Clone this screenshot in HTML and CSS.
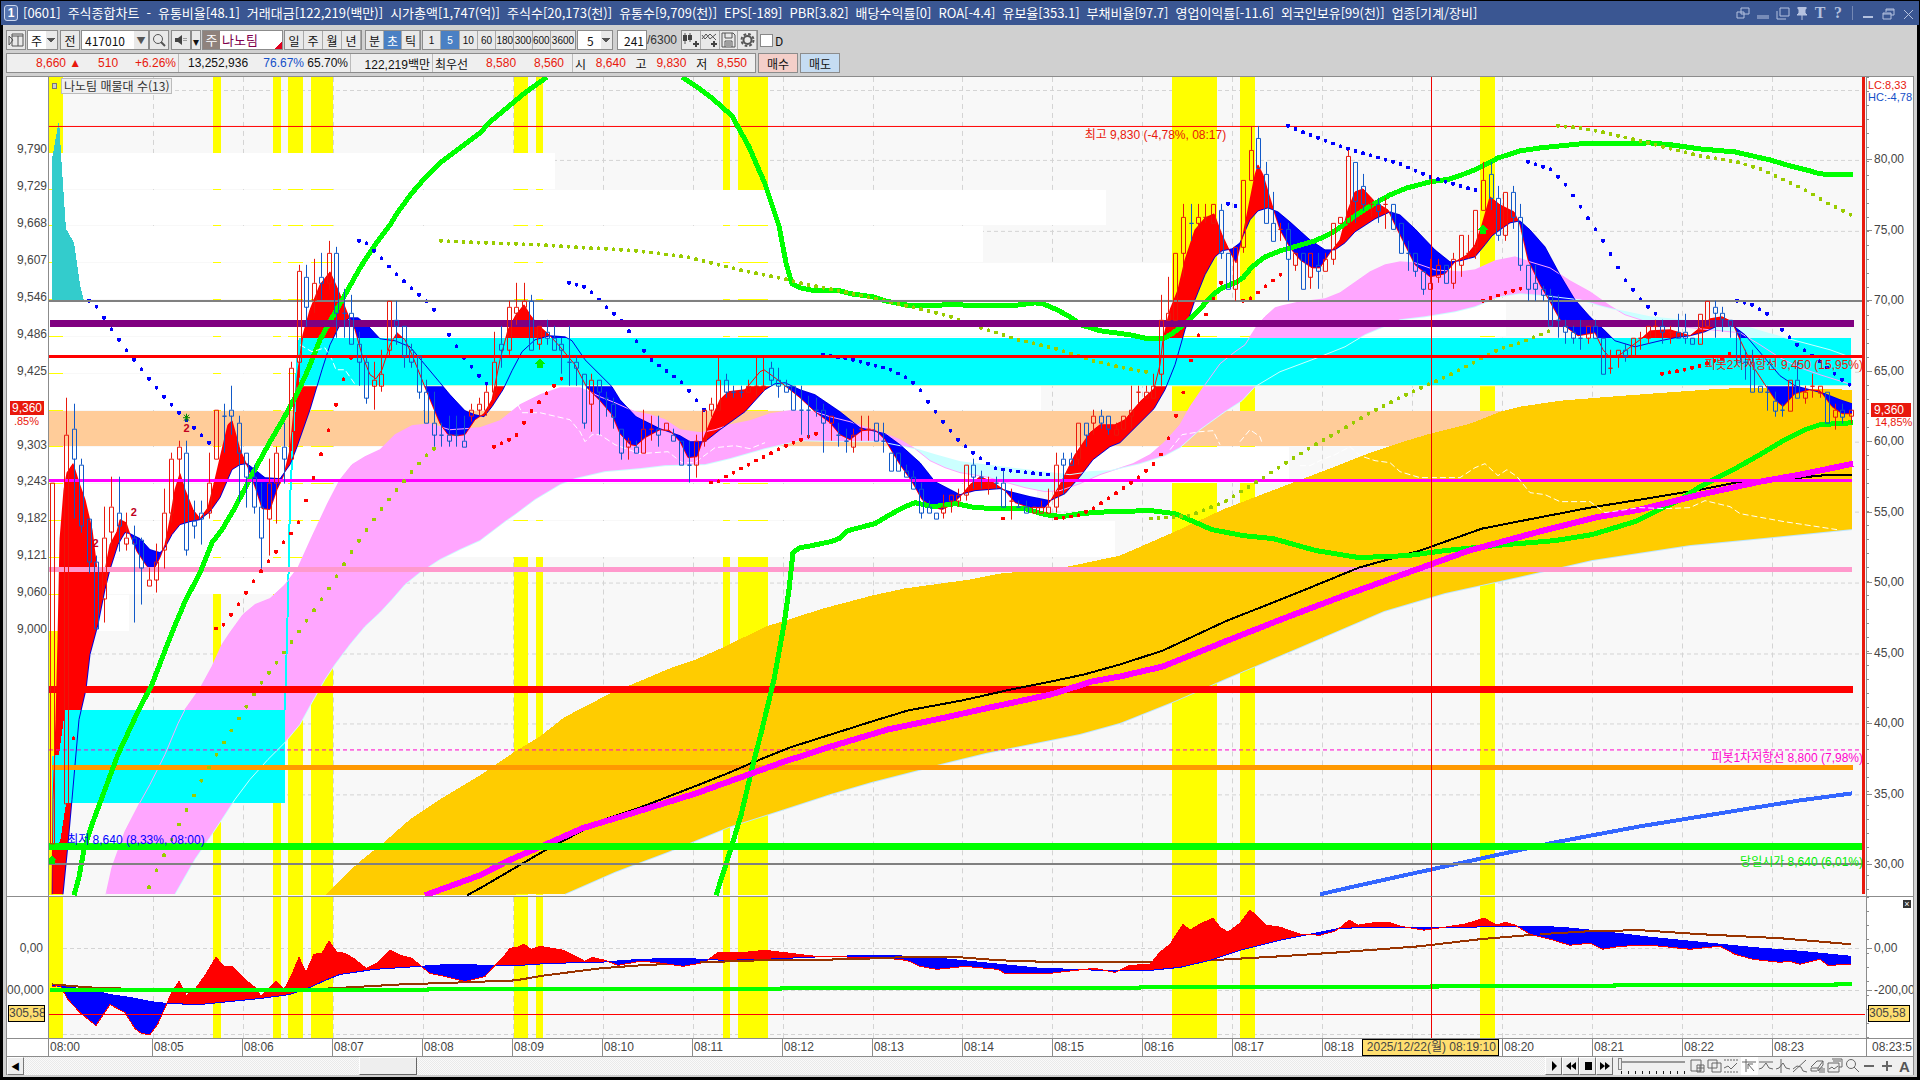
FILE: index.html
```html
<!DOCTYPE html>
<html lang="ko">
<head>
  <meta charset="UTF-8">
  <meta name="viewport" content="width=device-width, initial-scale=1.0">
  <title>[0601] 주식종합차트</title>
  <link rel="stylesheet" href="styles.css">
</head>
<body>
  <!-- Title bar -->
  <header class="titlebar">
    <span class="win-no">1</span>
    <h1><span>[0601]</span> <span>주식종합차트</span> <span>-</span> <span>유통비율[48.1]</span> <span>거래대금[122,219(백만)]</span> <span>시가총액[1,747(억)]</span> <span>주식수[20,173(천)]</span> <span>유통수[9,709(천)]</span> <span>EPS[-189]</span> <span>PBR[3.82]</span> <span>배당수익률[0]</span> <span>ROA[-4.4]</span> <span>유보율[353.1]</span> <span>부채비율[97.7]</span> <span>영업이익률[-11.6]</span> <span>외국인보유[99(천)]</span> <span>업종[기계/장비]</span></h1>
    <div class="win-buttons">
      <button aria-label="창 분리"><svg width="14" height="13"><path d="M5 1h8v6h-8zM1 5h7v6h-7z"/></svg></button>
      <button aria-label="접기"><svg width="14" height="13"><path d="M1 9h12M1 11h12"/></svg></button>
      <button aria-label="창 복사"><svg width="14" height="13"><path d="M4 1h9v8h-9zM1 4v8h9"/></svg></button>
      <button aria-label="고정"><svg width="12" height="13"><path class="solid" d="M2 0h8v2h-1v4l2 2h-10l2-2v-4h-1z"/><path d="M6 8v5"/></svg></button>
      <button class="glyph">T</button>
      <button class="glyph">?</button>
      <span class="bar"></span>
      <button aria-label="최소화"><svg width="14" height="13"><path d="M2 10h10" stroke-width="2"/></svg></button>
      <button aria-label="복원"><svg width="14" height="13"><path d="M5 5v-3h8v6h-3M2 6h8v6h-8zM5 3h8M2 7h8"/></svg></button>
      <button aria-label="닫기"><svg width="14" height="13"><path d="M3 3l9 9M12 3l-9 9"/></svg></button>
    </div>
  </header>

  <main class="client">
    <!-- Toolbar -->
    <div class="toolbar">
      <button class="tb" aria-label="패널"><svg width="16" height="14"><path d="M4 1h11v12h-11zM4 3h11M10 3v10M1 3v9l4-5z" class="ln"/></svg></button>
      <select class="mini" aria-label="구분"><option>주</option></select>
      <button class="tb prev">전</button>
      <span class="combo"><input class="code" aria-label="종목코드" value="417010"><button aria-label="목록">▼</button></span>
      <button class="tb find" aria-label="검색"><svg width="16" height="16"><circle cx="7" cy="7" r="4.5" class="ln"/><path d="M10 10l4 4" class="ln thick"/></svg></button>
      <button class="tb" aria-label="소리"><svg width="14" height="12"><path d="M1 4h3l4-3v10l-4-3h-3z" class="fl"/><path d="M10 4v4M12 4v4" class="ln" stroke-dasharray="1 1"/></svg></button>
      <button class="tb thin" aria-label="소리 설정">▾</button>
      <span class="stock"><b>주</b>나노팀</span>
      <div class="group period"><button>일</button><button>주</button><button>월</button><button>년</button></div>
      <div class="group unit"><button>분</button><button class="on">초</button><button>틱</button></div>
      <div class="group secs"><button>1</button><button class="on">5</button><button>10</button><button>60</button><button>180</button><button>300</button><button>600</button><button class="wide">3600</button></div>
      <select class="mini secsel" aria-label="초"><option>5</option></select>
      <input class="count" aria-label="봉 개수" value="241"><span class="total">/6300</span>
      <div class="group icons">
        <button aria-label="봉 추가"><svg width="17" height="16"><path d="M3 1v11M8 1v9" class="ln"/><path d="M1 3h4v6h-4zM6 3h4v5h-4zM11 11h6v2h-6zM13 9h2v6h-2z" class="fl"/></svg></button>
        <button aria-label="지표 추가"><svg width="17" height="16"><path d="M1 7l4-5 4 5 6-5M1 3l3 4 5-5 6 6" class="ln"/><path d="M10 11h6v2h-6zM12 9h2v6h-2z" class="fl"/></svg></button>
        <button aria-label="저장"><svg width="15" height="16"><path d="M1 1h11l2 2v12h-13zM4 1v5h7v-5M4 15v-6h7v6M5 11h5M5 13h5" class="ln"/></svg></button>
        <button aria-label="설정"><svg width="15" height="16"><circle cx="7.500" cy="8" r="4" class="ln gear"/><circle cx="7.500" cy="8" r="6" class="ln" stroke-width="2" stroke-dasharray="2.700 2"/></svg></button>
      </div>
      <label class="chk"><input type="checkbox">D</label>
    </div>

    <!-- Quote row -->
    <div class="quote">
      <div class="cells">
        <div class="cell w1 up"><span>8,660 ▲</span><span>510</span><span>+6.26%</span></div>
        <div class="cell w1"><span>13,252,936</span><span class="down pct">76.67%</span><span>65.70%</span></div>
        <div class="cell w2"><span>122,219백만</span></div>
        <div class="cell w3"><span>최우선</span><span class="up">8,580</span><span class="up">8,560</span></div>
        <div class="cell w4"><span>시</span><span class="up">8,640</span><span>고</span><span class="up">9,830</span><span>저</span><span class="up">8,550</span></div>
      </div>
      <button class="buy">매수</button>
      <button class="sell">매도</button>
    </div>

    <!-- Chart -->
    <section class="chart">
      <div class="pane main">
        <div class="axis left">
          <span>9,790</span><span>9,729</span><span>9,668</span><span>9,607</span><span>9,546</span><span>9,486</span><span>9,425</span>
          <span class="now">9,360<i>.85%</i></span>
          <span>9,303</span><span>9,243</span><span>9,182</span><span>9,121</span><span>9,060</span><span>9,000</span>
        </div>
        <div class="plot">
          <svg id="main-plot" viewBox="49 77 1817 820" preserveAspectRatio="none"></svg>
          <span class="tag name"><i></i>나노팀 매물대 수(13)</span>
          <span class="note high">최고 9,830 (-4,78%, 08:17)</span>
          <span class="note low">최저 8,640 (8,33%, 08:00)</span>
          <span class="note r2">피봇2차저항선 9,450 (15,95%)</span>
          <span class="note r1">피봇1차저항선 8,800 (7,98%)</span>
          <span class="note open">당일시가 8,640 (6,01%)</span>
          <span class="two t1">2</span><span class="two t2">2</span><span class="two t3">2</span>
        </div>
        <div class="axis right">
          <p class="lc">LC:8,33</p><p class="hc">HC:-4,78</p>
          <span>80,00</span><span>75,00</span><span>70,00</span><span>65,00</span><span>60,00</span><span>55,00</span><span>50,00</span><span>45,00</span><span>40,00</span><span>35,00</span><span>30,00</span>
          <p class="price">9,360</p><p class="rate">14,85%</p>
        </div>
      </div>
      <div class="pane sub">
        <div class="axis left"><span>0,00</span><span>00,000</span><p class="cursor">305,58</p></div>
        <div class="plot"><svg id="sub-plot" viewBox="49 898 1817 140" preserveAspectRatio="none"></svg></div>
        <div class="axis right"><button class="close" aria-label="닫기">×</button><span>0,00</span><span>-200,00</span><p class="cursor">305,58</p></div>
      </div>
      <div class="times">
        <span class="blank"></span>
        <div class="slots">
          <span class="first">08:00</span><span>08:05</span><span>08:06</span><span>08:07</span><span>08:08</span><span>08:09</span><span>08:10</span><span>08:11</span><span>08:12</span><span>08:13</span><span>08:14</span><span>08:15</span><span>08:16</span><span>08:17</span><span>08:18</span><span></span><span>08:20</span><span>08:21</span><span>08:22</span><span class="last">08:23</span>
          <span class="when">2025/12/22(월) 08:19:10</span>
        </div>
        <span class="end">08:23:5</span>
      </div>
      <!-- Scroll and tools -->
      <div class="bottom">
        <button class="raised" aria-label="왼쪽">◀</button>
        <div class="track"><span class="before"></span><span class="thumb"></span></div>
        <button class="raised" aria-label="재생"><svg width="12" height="12"><path d="M4 1l5 5-5 5z"/></svg></button>
        <button class="raised" aria-label="뒤로"><svg width="12" height="12"><path d="M6 2v8l-5-4zM11 2v8l-5-4z"/></svg></button>
        <button class="raised" aria-label="정지"><svg width="12" height="12"><path d="M3 2h7v8h-7z"/></svg></button>
        <button class="raised" aria-label="앞으로"><svg width="12" height="12"><path d="M1 2v8l5-4zM6 2v8l5-4z"/></svg></button>
        <label class="speed"><input type="range" min="0" max="100" value="0" aria-label="속도"></label>
        <div class="tools">
          <button aria-label="추가"><svg viewBox="0 0 16 16"><path d="M2 2h10v11h-10zM8 7h7v7h-7zM8 10h7M11 7v7"/></svg></button>
          <button aria-label="겹치기"><svg viewBox="0 0 16 16"><path d="M2 2h9v8h-9zM6 5h9v9h-9z"/></svg></button>
          <button aria-label="영역"><svg viewBox="0 0 16 16"><path d="M1 2h14M1 14h14" stroke-dasharray="2 1"/><path d="M1 10l4-2 3 3 6-6"/></svg></button>
          <button class="on" aria-label="십자선"><svg viewBox="0 0 16 16"><path d="M1 4h14M5 1v13M7 6l6 7M7 6v5M7 6h5"/></svg></button>
          <button aria-label="수평선"><svg viewBox="0 0 16 16"><path d="M1 4h14M1 11l3-1 4-5 3 5 4 1"/></svg></button>
          <button aria-label="수직선"><svg viewBox="0 0 16 16"><path d="M6 1v14M1 11l3-1 4-5 3 5 4 1"/></svg></button>
          <button aria-label="추세선"><svg viewBox="0 0 16 16"><path d="M1 14l13-12M1 11l4-3 4 1 2 4 4 1"/></svg></button>
          <button aria-label="지우개"><svg viewBox="0 0 16 16"><path d="M1 9l6-6h6l-5 7h-7v3h6M8 10v3l5-6v-4M10 10v5M12 9v6M14 10v5"/></svg></button>
          <button aria-label="차트 겹침"><svg viewBox="0 0 16 16"><path d="M5 1h10v8h-3M1 5h11v9h-11zM2 11l3-2 2 2 4-3M6 3h8"/></svg></button>
          <button aria-label="확대경"><svg viewBox="0 0 16 16"><circle cx="7" cy="6" r="4.500"/><path d="M10 9l5 5"/></svg></button>
          <button aria-label="축소"><svg viewBox="0 0 16 16"><path d="M3 8h10" stroke-width="2"/></svg></button>
          <button aria-label="확대"><svg viewBox="0 0 16 16"><path d="M3 8h10M8 3v10" stroke-width="2"/></svg></button>
          <button class="letter">A</button>
        </div>
      </div>
    </section>
  </main>
  <script src="script.js"></script>
</body>
</html>
```
FILE: styles.css
```css
* {
  box-sizing: border-box;
}

body {
  display: flex;
  flex-direction: column;
  height: 100vh;
  min-height: 600px;
  margin: 0;
  padding: 1px 1px 3px;
  background: #000;
  color: #111;
  font-family: "Liberation Sans", "Noto Sans CJK KR", sans-serif;
  font-size: 12px;
  overflow: hidden;
}

button, input, select {
  margin: 0;
  padding: 0;
  border: 0;
  border-radius: 0;
  background: none;
  color: inherit;
  font: inherit;
}

p, h1 {
  margin: 0;
}

svg {
  display: block;
}

/* title bar */
.titlebar {
  display: flex;
  align-items: center;
  flex: 0 0 24px;
  padding: 0 4px 0 3px;
  background: #3a5692;
  color: #fff;
}

.win-no {
  width: 14px;
  height: 16px;
  border: 1px solid #cdd7ee;
  border-radius: 3px;
  background: #5674b0;
  font-weight: bold;
  line-height: 14px;
  text-align: center;
}

.titlebar h1 {
  display: flex;
  flex: 1;
  gap: 7px;
  margin-left: 5px;
  overflow: hidden;
  font-family: "Noto Sans CJK KR", sans-serif;
  font-size: 13px;
  font-weight: normal;
  line-height: 20px;
  white-space: nowrap;
}

.win-buttons {
  display: flex;
  align-items: center;
  gap: 6px;
  color: #b4c1df;
}

.win-buttons path {
  fill: none;
  stroke: #b4c1df;
}

.win-buttons .solid {
  fill: #b4c1df;
}

.win-buttons .glyph {
  width: 12px;
  font: bold 16px/16px "Liberation Serif", serif;
}

.win-buttons .bar {
  width: 1px;
  height: 14px;
  margin: 0 2px;
  background: #7488b4;
}

.client {
  display: flex;
  flex: 1;
  flex-direction: column;
  gap: 3px;
  min-height: 0;
  margin: 0 2px;
  padding: 5px 3px 2px;
  background: #d0d0d0;
}

/* toolbar */
.toolbar {
  display: flex;
  flex: 0 0 20px;
  height: 20px;
  font-family: "Noto Sans CJK KR", sans-serif;
}

.toolbar button {
  display: flex;
  align-items: center;
  justify-content: center;
}

.tb, .mini, .combo, .stock, .count {
  border: 1px solid #8c8c8c;
  background: #e9e9e9;
}

.tb {
  width: 20px;
}

.ln {
  fill: none;
  stroke: #555;
}

.thick, .gear {
  stroke-width: 2;
}

.fl {
  fill: #444;
}

.mini {
  width: 31px;
  margin: 0 2px 0 1px;
  padding-left: 3px;
  appearance: none;
  background: conic-gradient(from -45deg at 50% 100%, #555 90deg, transparent 0) right 2px center / 7px 5px no-repeat,
    linear-gradient(#e9e9e9, #e9e9e9) right / 11px 100% no-repeat #fff;
}

.combo {
  display: flex;
  width: 68px;
  margin-left: 1px;
  background: #fff;
}

.combo button {
  width: 14px;
  background: #e9e9e9;
  color: #555;
  font-size: 9px;
}

.mini {
  background: linear-gradient(to bottom left, #555 50%, transparent 50%) right 2px center / 4px 5px no-repeat,
    linear-gradient(to bottom right, #555 50%, transparent 50%) right 2px center / 4px 5px no-repeat,
    linear-gradient(#e9e9e9, #e9e9e9) right / 11px 100% no-repeat #fff;
  background-position: right 6px center, right 2px center, right;
}

.code {
  width: 52px;
  padding-left: 3px;
}

.find {
  margin-right: 2px;
}

.thin {
  width: 10px;
}

.stock {
  width: 81px;
  margin-left: 1px;
  background: linear-gradient(135deg, transparent 50%, #e00020 50%) right bottom / 7px 7px no-repeat #fff;
  color: #80004d;
  font-size: 13px;
  line-height: 18px;
  white-space: nowrap;
}

.stock b {
  display: inline-block;
  width: 17px;
  margin-right: 2px;
  background: #8f827c;
  color: #fff;
  font-weight: normal;
  text-align: center;
}

.group {
  display: flex;
  margin-left: 1px;
  border: 1px solid #8c8c8c;
  background: #e9e9e9;
}

.group button {
  flex: 1;
  min-width: 0;
  border-right: 1px solid #aaa;
}

.group .on {
  background: #4a80c4;
  color: #fff;
}

.period {
  width: 78px;
}

.unit {
  width: 56px;
  margin-left: 3px;
}

.secs {
  width: 154px;
  font-family: "Liberation Sans", sans-serif;
  font-size: 10px;
}

.secs .wide {
  flex: 0 0 24px;
  border-right: 0;
}

.secsel {
  width: 36px;
  padding-left: 9px;
}

.count {
  width: 30px;
  margin-left: 2px;
  padding-right: 2px;
  background: #fff;
  text-align: right;
}

.total {
  width: 33px;
  color: #333;
  font-family: "Liberation Sans", sans-serif;
  line-height: 20px;
}

.icons {
  width: 77px;
}

.chk {
  display: flex;
  align-items: center;
  gap: 2px;
  margin-left: 2px;
}

.chk input {
  width: 13px;
  height: 13px;
  border: 1px solid #888;
  background: #fff;
  appearance: none;
}

/* quote row */
.quote {
  display: flex;
  flex: 0 0 20px;
  gap: 2px;
  height: 20px;
}

.cells {
  display: flex;
  width: 750px;
  border: 1px solid #8c8c8c;
  background: #efefef;
}

.cell {
  display: flex;
  align-items: center;
  justify-content: space-between;
  padding: 0 2px;
  border-right: 1px solid #bbb;
  white-space: nowrap;
}

.w1 {
  width: 172px;
}

.w1:first-child {
  padding-left: 29px;
}

.w1:nth-child(2) {
  padding-left: 9px;
}

.pct {
  margin-left: 12px;
}

.w2 {
  justify-content: flex-end;
  width: 82px;
}

.w3 {
  width: 140px;
  padding-right: 8px;
}

.w4 {
  flex: 1;
  padding-right: 8px;
  border: 0;
}

.up {
  color: #e8180c;
}

.down {
  color: #1450c8;
}

.buy, .sell {
  width: 40px;
  border: 1px solid #8c8c8c;
  background: #f4cfc9;
}

.sell {
  background: #c5dcf2;
}

/* chart */
.chart {
  display: flex;
  flex: 1;
  flex-direction: column;
  min-height: 0;
  border: 1px solid #8c8c8c;
  border-bottom: 0;
  background: #fff;
  color: #444;
}

.pane {
  display: flex;
  flex: 821 1 0;
  min-height: 0;
  border-bottom: 1px solid #8c8c8c;
}

.sub {
  flex-grow: 141;
}

.plot {
  position: relative;
  flex: 1;
  min-width: 0;
  overflow: hidden;
  background: #f8f8f8;
}

.plot svg {
  width: 100%;
  height: 100%;
  shape-rendering: crispEdges;
}

.axis {
  position: relative;
  display: flex;
  flex: 0 0 42px;
  flex-direction: column;
  justify-content: space-between;
  overflow: hidden;
  line-height: 14px;
}

.left {
  padding: 65px 1px 260px 0;
  border-right: 1px solid #8c8c8c;
  text-align: right;
}

.right {
  flex-basis: 47px;
  padding: 75px 0 25px 7px;
  border-left: 1px solid #8c8c8c;
  background: repeating-linear-gradient(#8c8c8c 0 1px, transparent 1px 14px) 0 0 / 2px 100% no-repeat;
}

.right span::before {
  position: absolute;
  left: 0;
  width: 5px;
  height: 1px;
  margin-top: 7px;
  background: #8c8c8c;
  content: "";
}

.lc, .hc, .price, .rate, .cursor {
  position: absolute;
  left: 1px;
}

.lc, .hc, .rate {
  font-size: 11px;
}

.lc {
  top: 1px;
  color: #e8180c;
}

.hc {
  top: 13px;
  color: #1450c8;
}

.price {
  top: 326px;
  left: 4px;
  width: 40px;
  padding-left: 3px;
}

.price, .now {
  background: #e8180c;
  color: #fff;
}

.rate {
  top: 338px;
  left: 8px;
  color: #e8180c;
}

.now {
  margin: 0 3px;
  padding-right: 2px;
}

.now i {
  position: absolute;
  right: 9px;
  margin-top: 13px;
  color: #e8180c;
  font-size: 11px;
  font-style: normal;
}

.sub .axis {
  justify-content: flex-start;
  gap: 28px;
  padding-top: 44px;
  padding-bottom: 0;
}

.sub .left {
  padding-right: 5px;
}

.cursor {
  top: 108px;
  right: 3px;
  height: 17px;
  overflow: hidden;
  border: 1px solid #000;
  background: #ffdf70;
  text-align: left;
}

.close {
  position: absolute;
  top: 3px;
  right: 2px;
  width: 8px;
  height: 8px;
  background: #333;
  color: #fff;
  font-size: 9px;
  line-height: 7px;
}

/* texts over the plot */
.note, .tag, .two {
  position: absolute;
  line-height: 14px;
  white-space: nowrap;
}

.note {
  line-height: 18px;
}

.tag {
  top: 1px;
  left: 12px;
  padding: 0 2px;
  border: 1px solid #bbb;
  background: #efefef;
  color: #333;
  font-family: "Noto Sans CJK KR", sans-serif;
}

.tag i {
  position: absolute;
  top: 4px;
  left: -10px;
  width: 5px;
  height: 6px;
  border: 1px solid #777;
  background: #ccc;
}

.high {
  top: 6%;
  left: 57%;
  color: #e8180c;
}

.low {
  top: 92%;
  left: 1%;
  color: #00f;
}

.r2 {
  top: 34%;
  right: 3px;
  color: #e8180c;
}

.r1 {
  top: 82%;
  right: 3px;
  color: #f0c;
}

.open {
  top: 95%;
  right: 3px;
  line-height: 14px;
  color: #0e0;
}

.two {
  color: #c00020;
  font-size: 11px;
  font-weight: bold;
}

.t1 {
  top: 42%;
  left: 7.4%;
}

.t2 {
  top: 52.3%;
  left: 4.5%;
}

.t3 {
  top: 56%;
  left: 2.4%;
}

/* time axis */
.times {
  display: flex;
  flex: 0 0 18px;
  border-bottom: 1px solid #8c8c8c;
  line-height: 16px;
}

.blank {
  flex: 0 0 41px;
}

.slots {
  position: relative;
  display: flex;
  flex: 1;
  min-width: 0;
}

.slots span {
  flex: 90 1 0;
  min-width: 0;
  padding-left: 1px;
  overflow: hidden;
  border-left: 1px solid #8c8c8c;
}

.slots .first {
  flex-grow: 104;
}

.slots .last {
  flex-grow: 94;
}

.slots .when {
  position: absolute;
  left: 72.3%;
  width: 137px;
  height: 17px;
  border: 1px solid #000;
  background: #ffdf70;
  line-height: 15px;
  text-align: center;
  white-space: nowrap;
}

.end {
  flex: 0 0 47px;
  padding-left: 5px;
  border-left: 1px solid #8c8c8c;
}

/* scroll and tools */
.bottom {
  display: flex;
  flex: 0 0 18px;
  background: #f0f0f0;
}

.raised {
  display: flex;
  align-items: center;
  justify-content: center;
  width: 17px;
  border: 1px solid;
  border-color: #fff #777 #777 #fff;
  background: #eee;
  color: #000;
  font-size: 9px;
}

.track {
  display: flex;
  flex: 1;
  background: repeating-conic-gradient(#eaeaea 0 25%, #fafafa 0 50%) 0 0 / 2px 2px;
}

.before {
  flex: 0 0 22%;
}

.thumb {
  width: 58px;
  border: 1px solid;
  border-color: #fff #666 #666 #fff;
  background: #eee;
}

.speed {
  width: 74px;
  padding: 0 2px 0 5px;
  background: repeating-linear-gradient(90deg, #222 0 1px, transparent 1px 7px) 8px 14px / 66px 3px no-repeat;
}

.speed input {
  display: block;
  width: 100%;
  height: 14px;
  appearance: none;
  background: linear-gradient(#999, #999) 0 4px / 100% 2px no-repeat;
}

.speed input::-webkit-slider-thumb {
  width: 4px;
  height: 12px;
  border: 1px solid #888;
  background: #eee;
  appearance: none;
}

.tools {
  display: flex;
  width: 224px;
  margin-left: 2px;
}

.tools button {
  flex: 1;
  min-width: 0;
}

.tools svg {
  width: 16px;
  height: 16px;
  fill: none;
  stroke: #666;
}

.tools .on {
  background: #fff;
}

.tools .letter {
  color: #555;
  font-size: 15px;
  font-weight: bold;
}
```
FILE: script.js
```js
const NS = "http://www.w3.org/2000/svg";
const mainPlot = document.getElementById("main-plot");
const subPlot = document.getElementById("sub-plot");

function add(parent, tag, attrs) {
  const el = document.createElementNS(NS, tag);
  for (const key in attrs) el.setAttribute(key, attrs[key]);
  parent.appendChild(el);
}

function points(text) {
  return text.trim().split(/\s+/).map(p => p.split(",").map(Number));
}

function line(svg, text, color, width = 1, dash = "none") {
  add(svg, "polyline", { points: text, fill: "none", stroke: color, "stroke-width": width, "stroke-dasharray": dash, "stroke-linejoin": "round" });
}

function rect(svg, x, y, right, bottom, color) {
  add(svg, "rect", { x, y, width: right - x, height: bottom - y, fill: color });
}

function valueAt(pts, x) {
  for (let i = 1; i < pts.length; i++) {
    const [x0, y0] = pts[i - 1];
    const [x1, y1] = pts[i];
    if (x <= x1) return y0 + (y1 - y0) * (x - x0) / (x1 - x0 || 1);
  }
  return pts[pts.length - 1][1];
}

// Fill between two lines, one colour where a is above b and one where it is below
function ribbon(svg, textA, textB, above, below) {
  const a = points(textA);
  const b = points(textB);
  const end = a[a.length - 1][0];
  let run = [], side = null;
  const flush = () => {
    if (run.length > 1) {
      const top = run.map(r => r[0] + "," + r[1]);
      const back = run.map(r => r[0] + "," + r[2]).reverse();
      add(svg, "polygon", { points: top.concat(back).join(" "), fill: side ? above : below });
    }
  };
  for (let x = a[0][0]; x <= end; x++) {
    const ya = valueAt(a, x), yb = valueAt(b, x);
    if (side !== null && side !== ya < yb) {
      run.push([x, ya, yb]);
      flush();
      run = [];
    }
    side = ya < yb;
    run.push([x, ya, yb]);
  }
  flush();
}

function dots(text, color) {
  const pts = points(text);
  const end = pts[pts.length - 1][0];
  for (let x = pts[0][0]; x <= end + 1; x += 7.5) {
    add(mainPlot, "circle", { cx: x, cy: valueAt(pts, x), r: 2, fill: color });
  }
}

function background(svg, top, bottom, rows) {
  rows.forEach(y => line(svg, `49,${y} 1862,${y}`, "#d4d4d4", 1, "4 3"));
  for (let i = 0; i < 19; i++) {
    const x = Math.round(153 + i * 89.94) + 0.5;
    line(svg, `${x},${top} ${x},${bottom}`, "#d4d4d4", 1, "5 4");
  }
  [[49, 63], [213, 221], [273, 281], [288, 303], [311, 333], [514, 528], [536, 543], [723, 730], [738, 768], [1172, 1217], [1240, 1255], [1480, 1495]]
    .forEach(([a, b]) => rect(svg, a, top, b, bottom, "#ff0"));
}

// ---- main pane ----
background(mainPlot, 77, 896, [90.5, 160.5, 231.5, 372.5, 442.5, 512.5, 583.5, 654.5, 724.5, 795.5]);

// volume by price
[[153, 189, 555], [190, 225, 1106], [226, 262, 983], [263, 299, 1172], [300, 336, 1506], [337, 373, 1500], [374, 410, 1041],
 [447, 483, 1289], [484, 520, 1037], [521, 557, 1115], [558, 594, 310], [595, 631, 129]]
  .forEach(([y, b, x]) => rect(mainPlot, 49, y, x, b, "#fff"));
rect(mainPlot, 49, 411, 1851, 446, "#fc9");

const pink = "106,895 112,868 125,832 140,803 150,785 165,755 178,724 185,710 200,689 212,667 222,645 230,633 243,615 255,605 270,599 285,585 298,568 312,537 328,503 340,480 352,465 365,457 380,450 395,435 412,426 430,424 450,430 480,428 500,421 520,405 540,395 560,388 580,388 590,392 600,397 615,403 635,412 650,415 665,420 680,430 700,433 715,430 730,425 750,421 770,414 790,411 815,412 830,417 850,422 870,429 885,434 900,440 915,449 930,461 945,468 960,473 985,477 1000,481 1025,488 1045,492 1060,491 1080,484 1100,475 1133,464 1150,455 1165,442 1180,425 1190,407 1205,385 1220,364 1235,352 1245,345 1257,326 1265,317 1275,308 1282,306 1300,302 1325,299 1340,293 1350,286 1370,272 1385,265 1400,262 1415,263 1435,270 1460,272 1475,270 1495,261 1515,257 1530,262 1550,268 1570,281 1590,292 1610,306 1625,315 1650,323 1700,329 1740,333 1760,345 1780,358 1800,368 1820,375 1852,385";
const pale = "175,895 195,860 210,838 222,820 235,800 250,780 268,760 285,743 300,725 312,703 325,680 335,665 350,645 365,627 380,613 392,600 405,585 420,573 440,560 460,550 480,541 505,522 515,515 535,500 560,485 575,479 605,472 640,469 665,466 705,465 730,459 765,449 800,441 840,442 880,442 900,446 915,449 935,455 960,462 1000,467 1050,473 1070,475 1090,472 1110,471 1140,464 1165,456 1180,448 1200,430 1225,412 1242,401 1255,387 1280,372 1320,357 1345,347 1365,335 1400,320 1425,317 1455,312 1475,307 1500,297 1520,294 1545,296 1580,300 1600,306 1612,309 1650,317 1700,322 1740,325 1770,334 1800,342 1830,350 1852,358";
ribbon(mainPlot, pink, "106,895 " + pale, "#ffa6ff", "#cff");

const amberTop = "326,895 343,878 360,862 385,842 410,820 440,800 480,776 515,752 540,737 564,718 610,694 627,687 672,668 696,660 725,647 766,627 798,617 823,609 872,596 904,589 970,580 1000,574 1023,572 1068,567 1120,556 1175,532 1225,509 1298,481 1340,465 1365,455 1400,443 1430,434 1470,424 1500,412 1520,407 1560,401 1610,397 1650,394 1720,389 1760,388 1852,390";
const amberLow = "565,895 615,873 668,853 729,828 782,811 831,795 872,783 919,771 941,765 986,754 1051,741 1080,735 1120,724 1175,702 1225,680 1298,649 1384,612 1445,594 1518,578 1592,561 1690,546 1763,539 1852,530";
ribbon(mainPlot, amberTop, "326,896 " + amberLow, "#fc0", "#fc0");
line(mainPlot, amberLow, "#bde6ff");

const fast = "52,895 53,800 56,720 58,640 60,540 64,490 67,473 73,464 79,483 85,500 92,530 97,570 105,571 110,545 117,532 120,520 126,523 130,535 137,552 147,567 153,572 160,558 165,545 170,520 175,490 180,474 185,490 193,510 200,519 208,508 215,480 222,450 228,425 232,421 240,450 248,468 256,490 262,509 270,510 277,490 284,475 290,450 294,410 298,370 303,335 310,310 320,285 330,272 338,290 348,315 355,330 362,355 370,375 376,379 382,370 390,345 397,333 405,340 412,355 420,375 428,395 440,424 448,435 458,436 465,435 475,420 484,414 492,400 500,360 508,330 516,315 524,305 530,315 538,325 550,336 560,347 575,365 587,388 600,401 612,415 620,434 630,445 636,446 645,438 660,430 670,431 680,442 688,458 697,457 703,440 712,418 720,400 728,392 745,390 760,372 764,370 775,378 785,386 800,398 815,412 830,423 840,435 850,440 862,431 875,430 885,440 900,465 912,482 922,500 932,507 942,510 952,505 962,495 970,485 980,477 992,482 1005,491 1015,503 1030,508 1045,508 1050,502 1060,485 1075,455 1090,433 1100,425 1115,425 1125,420 1140,402 1154,389 1160,365 1163,340 1170,310 1178,290 1185,260 1195,230 1205,218 1214,214 1222,235 1230,252 1236,263 1243,235 1250,200 1255,175 1258,165 1263,175 1272,205 1280,230 1290,248 1300,260 1312,268 1320,268 1330,253 1340,240 1348,210 1355,192 1363,189 1375,202 1388,210 1395,225 1405,245 1415,265 1430,277 1445,274 1455,262 1467,255 1475,245 1482,225 1490,197 1500,205 1514,212 1520,225 1528,260 1540,285 1550,302 1563,325 1578,336 1595,333 1603,350 1610,358 1620,355 1640,340 1650,331 1670,330 1690,336 1700,328 1710,319 1722,317 1732,322 1740,340 1752,365 1765,385 1775,400 1783,407 1795,394 1810,390 1820,391 1832,407 1842,414 1852,414";
const slow = "63,895 68,845 72,800 79,720 86,690 90,655 98,625 105,590 110,570 118,545 125,533 130,534 140,539 150,550 160,553 165,548 172,535 180,525 190,522 200,520 210,512 220,498 232,470 240,465 247,464 255,470 265,478 280,479 290,465 296,450 310,410 322,370 330,345 340,325 350,318 358,318 368,326 380,339 395,341 410,347 425,365 440,383 450,395 465,411 475,415 484,417 492,407 503,390 512,371 522,352 535,340 550,336 565,337 572,341 585,360 600,375 612,387 620,400 636,417 660,429 680,436 690,442 705,442 720,430 745,412 765,390 775,384 785,383 800,390 815,395 840,412 860,428 885,434 900,445 920,463 935,482 960,495 975,491 1000,489 1010,492 1030,497 1050,501 1065,494 1080,477 1093,460 1110,447 1120,443 1154,409 1165,390 1175,365 1185,330 1195,300 1205,275 1215,257 1222,251 1232,249 1240,243 1250,220 1258,211 1268,208 1278,212 1290,222 1310,240 1325,250 1335,250 1345,243 1355,232 1375,219 1390,212 1400,215 1415,229 1435,250 1450,262 1460,261 1475,257 1485,245 1492,236 1500,230 1510,223 1520,221 1530,230 1545,247 1560,275 1575,300 1590,317 1605,331 1615,341 1635,347 1660,341 1675,338 1690,336 1705,332 1718,326 1732,325 1745,335 1762,355 1780,376 1795,386 1810,390 1825,394 1840,400 1852,404";
ribbon(mainPlot, fast, "52,895 " + slow, "#f00", "#00f");
add(mainPlot, "polygon", { points: "52,159 59,120 62,170 66,229 74,243 80,285 84,301 52,301", fill: "#3cc" });

// cyan boxes
rect(mainPlot, 299, 338, 1851, 386, "#0ff");
line(mainPlot, "299,386 1851,386", "#ffc");
add(mainPlot, "polygon", { points: "65,711 285,711 285,804 66,804 60,843 52,844 52,757 59,755", fill: "#0ff" });
line(mainPlot, "285,711 288,600 290,500 297,364 299,340", "#0ff", 2);

line(mainPlot, pink, "#ffa6ff");
line(mainPlot, pale, "#cff");
line(mainPlot, slow, "#00d");
line(mainPlot, fast, "#f00");

// horizontal levels
line(mainPlot, "49,126.5 1862,126.5", "#f00");
line(mainPlot, "49,569.5 1852,569.5", "#f9c", 5);
line(mainPlot, "49,690.5 1853,690.5", "#f00", 7);
line(mainPlot, "49,750.5 1862,750.5", "#f0c", 1, "4 3");
line(mainPlot, "52,768.5 1853,768.5", "#f90", 5);

line(mainPlot, "467,896 480,889 545,851 602,821 643,807 692,788 725,775 753,763 790,748 831,735 872,722 908,711 962,701 1011,690 1051,682 1084,675 1120,665 1163,651 1225,622 1298,593 1359,568 1420,551 1482,529 1528,520 1590,508 1640,500 1700,490 1740,482 1800,478 1830,475 1852,475", "#000", 2);
line(mainPlot, "74,896 79,878 84,850 92,825 105,790 118,755 125,740 138,712 152,685 160,664 172,633 185,602 200,573 212,543 222,530 235,508 252,475 270,442 283,420 298,392 308,370 320,340 332,318 345,295 360,268 375,245 390,225 398,212 412,193 425,178 440,163 460,148 480,133 490,122 526,92 547,77", "#0f0", 5);
line(mainPlot, "682,77 697,87 713,99 732,116 749,147 765,184 779,226 786,263 792,284 800,288 815,291 840,291 851,294 873,297 885,301 911,306 950,305 1012,306 1035,303 1043,304 1057,310 1070,317 1081,325 1100,331 1130,335 1148,339 1163,339 1172,334 1185,324 1200,309 1213,295 1222,288 1235,283 1243,278 1252,267 1265,257 1280,251 1294,247 1315,241 1330,234 1342,226 1355,216 1372,205 1390,195 1407,188 1430,182 1450,179 1470,172 1485,165 1498,158 1520,151 1540,148 1580,144 1650,143 1672,145 1700,149 1735,152 1770,160 1790,166 1810,171 1820,174 1853,175", "#0f0", 5);
line(mainPlot, "716,896 726,865 741,816 753,765 762,730 774,680 784,625 789,590 793,553 800,548 807,547 831,542 839,539 848,531 875,524 890,515 905,507 915,503 933,507 956,504 975,508 1000,509 1025,509 1045,515 1062,517 1080,514 1110,512 1151,511 1175,514 1212,530 1243,536 1273,539 1316,551 1359,558 1408,556 1445,551 1506,545 1555,541 1592,535 1635,522 1680,500 1700,487 1735,469 1760,455 1785,440 1805,430 1820,425 1853,423", "#0f0", 5);
line(mainPlot, "425,896 480,876 509,861 553,842 582,829 635,813 696,794 749,775 782,763 831,747 888,730 941,719 990,708 1051,695 1092,682 1120,677 1163,667 1225,642 1286,618 1347,595 1408,573 1469,551 1543,531 1595,518 1640,510 1700,495 1760,482 1800,475 1853,464", "#f0f", 6);
line(mainPlot, "1320,895 1355,887 1400,877 1450,866 1500,855 1550,844 1592,836 1640,827 1683,820 1750,809 1800,801 1852,794", "#36f", 4);

line(mainPlot, "49,480.5 1852,480.5", "#f0f", 3);
line(mainPlot, "49,847.5 1862,847.5", "#0f0", 7);
line(mainPlot, "49,865 1862,865", "#808080", 2);

// lagging line
line(mainPlot, "300,345 312,352 325,348 332,360 336,370 345,370 356,386", "#fff", 1, "6 3");
line(mainPlot, "518,405 522,413 540,413 570,420 580,432 585,442 592,435 600,435 615,445 640,454 668,452 682,463 695,463 715,448 735,446 750,449 765,443", "#fff", 1, "6 3");
line(mainPlot, "1170,450 1182,435 1200,432 1213,431 1220,445", "#fff", 1, "6 3");
line(mainPlot, "1240,442 1250,430 1260,437 1262,443", "#fff", 1, "6 3");
line(mainPlot, "1300,466 1310,466 1322,460 1335,455 1350,447 1360,456 1375,461 1390,463 1400,472 1420,478 1460,478 1475,468 1485,464 1498,476 1507,470 1517,477 1530,493 1545,495 1560,502 1590,502 1605,513 1640,508 1665,509 1690,508 1705,501 1730,507 1740,514 1784,522 1837,530", "#fff", 1, "6 3");

dots("89,301 96,306 104,318 111,329 126,350 149,379 164,397 179,413 194,428 209,443", "#00f");
dots("359,241 366,243 381,258 396,274 411,288 426,301 434,310 449,335 464,358 479,376 486,384", "#00f");
dots("569,283 584,287 591,292 606,307 621,320 628,330 636,341 651,360 666,371 681,382 688,390 696,400 703,410", "#00f");
dots("823,355 853,360 891,370 906,378 913,383 921,391 928,402 943,422 958,440 973,453 988,464 996,469 1011,471 1048,475", "#00f");
dots("1228,204 1235,206", "#00f");
dots("1288,126 1310,135 1348,149 1400,164 1430,177 1460,186 1475,190", "#00f");
dots("1528,162 1550,169 1565,184 1580,206 1603,241 1625,280 1640,299 1655,314", "#00f");
dots("1737,301 1752,305 1767,314 1782,330 1797,345 1820,362 1842,380 1851,386", "#00f");
dots("73.5,739 74,739", "#f00");
dots("216,629 224,625 239,604 254,581 269,561 284,542 291,534 299,522 314,477 329,429 344,378 351,358", "#f00");
dots("494,447 509,440 516,436 531,412 546,394 554,386 561,379", "#f00");
dots("711,483 718,482 726,477 756,461 786,446 816,434", "#f00");
dots("1003,519 1004,519", "#f00");
dots("1056,519 1078,516 1093,509 1108,499 1120,491 1138,478 1153,465 1160,457 1168,440 1175,419 1183,395 1190,364 1198,337 1205,317 1213,300 1220,283", "#f00");
dots("1243,301 1250,299 1265,287 1280,275", "#f00");
dots("1483,301 1505,293 1520,289", "#f00");
dots("1662,374 1685,370 1700,366 1723,358 1730,354", "#f00");
dots("149,888 156,872 164,856 179,825 194,796 201,782 216,756 239,719 261,684 284,653 306,622 329,589 351,553 366,531 381,510 396,491 411,473 426,456 434,449", "#9c0");
dots("441,241 460,242 539,245 637,251 686,257 735,269 784,279 808,285 830,289 885,301 928,311 951,317 981,328 1018,340 1056,349 1093,361 1123,368 1145,372", "#9c0");
dots("1151,519 1190,516 1225,502 1265,477 1280,467 1310,448 1340,431 1370,413 1400,398 1430,384 1450,375 1475,362 1500,349 1520,343 1550,331", "#9c0");
dots("1558,126 1580,128 1602,132 1640,141 1700,156 1737,162 1760,169 1782,179 1805,190 1827,203 1851,215", "#9c0");

line(mainPlot, "49,301 1862,301", "#808080", 2);
line(mainPlot, "50,323.5 1854,323.5", "#800080", 7);
line(mainPlot, "49,356.5 1862,356.5", "#f00", 3);

// candles: x high top bottom low, u = up, d = down
const candles = `52 483 483 844 844 u|66 398 435 804 804 u|74 404 429 459 519 d|81 459 465 526 533 d|89 519 519 562 574 d|96 556 562 629 629 d|104 507 538 599 623 u|111 477 507 532 547 u|119 477 513 526 552 d|126 513 538 544 551 u|134 526 538 544 623 d|141 538 540 568 605 d|149 568 580 586 586 u|156 544 562 580 593 u|164 489 513 550 569 u|171 453 459 513 523 u|179 441 447 459 475 u|186 441 453 550 556 d|194 501 521 526 539 d|201 501 513 519 545 d|209 453 483 513 519 u|216 410 410 459 459 u|224 404 416 416 453 d|231 386 410 416 435 d|239 416 423 453 502 d|246 453 453 477 508 d|254 465 477 507 514 d|261 483 507 538 569 d|269 459 483 519 556 u|276 447 453 483 524 u|284 423 447 459 484 d|291 362 368 459 459 u|299 265 271 362 378 u|306 265 277 307 327 d|314 259 283 300 313 u|321 253 277 283 300 d|329 241 253 283 290 u|336 247 253 313 338 d|344 289 313 313 338 d|351 295 313 344 344 d|359 332 344 362 386 d|366 356 362 398 404 d|374 362 380 386 410 u|381 350 374 386 392 u|389 301 301 350 356 u|396 301 320 326 345 d|404 326 326 356 368 d|411 344 350 362 368 d|419 356 356 392 399 d|426 380 392 423 423 d|434 392 423 435 447 d|441 423 435 435 447 d|449 416 435 441 447 d|456 416 435 435 447 d|464 416 441 447 447 d|471 404 410 416 422 u|479 398 404 410 416 u|486 386 392 410 416 u|494 332 362 392 401 u|501 326 344 350 368 d|509 301 307 350 355 u|516 283 307 313 325 u|524 283 301 307 307 u|531 295 301 350 350 d|539 326 326 344 350 u|547 320 332 338 345 d|554 326 338 350 350 d|561 338 344 350 374 d|569 326 362 362 386 d|576 356 362 368 386 d|584 374 374 423 429 d|591 374 380 404 432 u|599 380 380 392 435 d|606 392 398 398 417 d|613 398 404 417 429 d|621 429 429 453 460 d|628 438 441 447 460 u|636 441 447 453 453 d|643 410 429 453 453 u|651 416 429 429 441 u|658 416 429 435 447 d|666 423 423 430 430 u|673 429 435 441 441 d|681 441 441 465 465 d|689 441 465 465 483 d|696 435 441 465 478 u|704 410 410 441 447 u|711 398 404 410 417 u|718 358 380 410 410 u|726 374 380 392 398 d|733 386 392 392 398 d|741 386 392 392 398 d|748 380 386 392 392 u|756 358 386 386 396 u|763 358 386 386 392 u|771 362 368 380 386 d|778 368 380 386 398 d|786 380 386 392 392 d|793 386 386 410 410 d|801 386 410 410 435 d|808 396 410 410 438 d|816 398 410 410 417 d|823 404 410 423 453 d|831 416 416 423 441 u|838 423 435 435 447 d|846 429 441 441 453 d|853 429 435 447 453 u|861 416 429 429 441 u|868 416 429 429 441 u|876 423 423 441 441 d|883 423 441 441 453 d|891 453 453 471 471 d|898 453 453 471 471 d|906 465 471 477 477 d|913 471 477 489 489 d|921 483 489 513 519 d|929 501 507 513 513 d|936 513 513 519 519 d|943 495 507 513 519 u|951 495 495 501 513 u|958 489 495 501 507 u|966 465 465 495 501 u|973 459 465 477 489 d|981 471 477 477 489 d|988 477 483 483 495 u|996 477 483 483 489 d|1003 471 483 507 507 d|1011 489 501 501 520 u|1018 501 507 507 507 d|1026 501 507 513 513 d|1034 507 507 513 513 u|1041 501 507 513 513 u|1048 489 507 513 513 u|1056 453 465 507 513 u|1063 453 459 465 495 d|1071 453 459 465 465 d|1078 423 423 459 465 u|1086 423 423 435 447 d|1093 410 416 423 435 u|1101 410 416 423 429 d|1108 416 416 429 435 d|1116 423 429 435 435 u|1123 416 416 429 429 u|1131 386 410 416 429 u|1138 386 392 392 404 u|1146 386 392 398 398 u|1153 374 386 398 398 u|1161 295 320 374 386 u|1168 277 313 320 320 u|1175 253 253 320 320 u|1183 204 217 253 277 u|1191 204 223 223 241 d|1198 204 217 223 229 u|1205 204 217 217 223 u|1213 204 204 223 223 u|1221 204 210 253 259 d|1228 253 253 289 289 d|1235 247 247 289 301 u|1243 180 180 247 253 u|1251 126 150 180 180 u|1258 126 138 168 168 d|1266 162 174 223 223 d|1273 192 223 241 241 d|1280 223 229 229 241 u|1288 223 229 259 301 d|1295 253 253 265 271 u|1303 253 253 289 289 d|1310 253 253 277 289 u|1318 253 265 271 289 d|1325 253 259 271 271 u|1333 223 223 259 265 u|1340 217 217 223 223 u|1348 150 156 223 223 u|1355 162 162 201 223 d|1363 174 186 204 211 d|1371 198 204 204 217 u|1378 198 204 211 223 d|1385 198 204 204 229 u|1393 204 204 229 229 d|1401 223 223 253 253 d|1408 241 253 253 271 d|1415 253 253 271 277 d|1423 271 271 289 295 d|1430 259 283 289 289 u|1438 259 265 277 283 u|1446 265 265 283 283 d|1453 253 259 283 289 u|1461 235 235 265 277 u|1468 235 253 253 259 u|1475 210 210 247 259 u|1483 162 180 210 210 u|1491 162 174 198 210 d|1498 186 198 235 241 d|1505 192 192 235 241 u|1513 186 192 217 229 d|1520 204 217 265 271 d|1528 265 265 289 301 d|1535 265 283 289 301 d|1543 286 289 295 301 d|1550 289 295 326 326 d|1558 295 320 320 338 d|1565 320 326 332 344 d|1573 326 332 338 344 d|1580 320 338 338 350 d|1588 326 326 338 344 u|1595 320 326 338 338 d|1603 338 338 374 374 d|1610 350 368 368 374 u|1618 350 350 356 368 u|1625 344 350 356 362 d|1633 338 338 356 356 u|1640 332 338 338 350 u|1648 326 326 338 344 u|1655 320 326 326 338 u|1662 320 326 332 344 d|1670 326 332 332 344 u|1678 314 332 338 338 d|1685 314 332 338 344 d|1692 338 338 344 344 d|1700 314 314 344 344 u|1707 301 301 326 326 u|1715 301 307 313 338 d|1722 307 313 319 332 d|1730 320 320 326 338 d|1738 332 332 362 362 d|1745 350 362 362 380 d|1752 350 362 392 392 d|1760 386 386 392 392 d|1767 386 392 392 411 d|1775 392 401 411 417 d|1782 404 410 410 417 d|1790 380 380 411 411 u|1797 362 380 398 398 d|1805 386 392 398 404 u|1812 374 386 386 398 u|1820 386 386 393 398 u|1827 392 392 423 423 d|1835 404 410 417 430 u|1842 404 410 417 424 d|1851 410 410 416 424 u`;
candles.split("|").forEach(item => {
  const [x, h, t, b, l, dir] = item.split(" ");
  const c = +x + 0.5;
  const color = dir === "u" ? "#e8180c" : "#1058c8";
  add(mainPlot, "path", {
    d: `M${c} ${h}V${t}M${c} ${b}V${l}M${c - 2} ${+t + 0.5}h4V${+b + 0.5}h-4z`,
    fill: "none",
    stroke: color
  });
});

// buy arrows
[[52, 856], [540, 359], [1483, 225]].forEach(([x, y]) => {
  add(mainPlot, "path", { d: `M${x} ${y}l5 5h-2v4h-6v-4h-2z`, fill: "#0e0" });
});
add(mainPlot, "path", { d: "M183 418h7M186.5 414v8M184 415l5 6M189 415l-5 6", stroke: "#080" });

// last price edge and cursor
rect(mainPlot, 1862, 77, 1865, 895, "#e8180c");
line(mainPlot, "1431.5,77 1431.5,897", "#e00");

// ---- sub pane ----
background(subPlot, 898, 1038, [949.5, 991.5, 1034.5]);
const subSlow = "52,986 70,988 90,990 110,995 130,998 150,1002 167,1004 200,1005 230,1002 260,999 290,995 310,988 325,981 340,975 375,970 420,967 450,965 490,966 520,966 550,964 600,963 640,960 680,959 725,961 765,960 830,957 890,956 940,959 980,963 1040,969 1075,970 1100,971 1150,971 1180,968 1210,961 1240,951 1280,941 1300,937 1340,929 1420,928 1470,928 1520,927 1560,928 1600,932 1650,938 1700,943 1750,948 1800,952 1851,957";
const subFast = "52,987 60,986 68,1000 80,1013 96,1026 110,1005 125,1013 135,1029 142,1034 150,1035 158,1024 166,1006 172,992 179,982 186,996 195,990 205,976 216,958 224,967 232,967 245,980 255,988 261,997 268,990 276,982 284,990 292,975 299,958 306,973 314,955 322,954 329,942 337,953 345,954 355,960 366,969 378,963 390,951 400,956 412,959 420,966 430,974 445,977 465,982 485,977 494,967 503,958 510,949 518,948 524,945 531,950 540,947 563,951 585,962 592,958 605,961 618,966 640,962 655,963 683,967 705,963 718,953 745,953 765,951 790,954 815,957 860,958 900,960 910,962 920,967 937,970 965,967 998,970 1005,974 1050,974 1075,971 1095,969 1115,973 1130,966 1150,965 1160,953 1170,945 1183,925 1190,931 1200,925 1213,919 1220,928 1228,933 1240,924 1250,911 1258,918 1266,926 1280,928 1300,935 1320,936 1335,932 1342,927 1349,921 1358,926 1370,924 1388,923 1400,927 1424,931 1445,928 1465,925 1484,919 1497,926 1505,923 1515,926 1530,935 1550,940 1570,946 1590,944 1603,950 1620,947 1650,946 1690,950 1720,947 1735,955 1753,960 1780,963 1790,962 1800,965 1820,960 1828,966 1851,965";
line(subPlot, "52,985 90,988 120,989 200,993 330,989 400,985 460,983 515,981 545,976 600,969 640,966 700,963 760,961 850,960 900,958 960,958 1000,961 1060,963 1150,963 1210,961 1280,957 1340,953 1420,947 1480,940 1540,935 1590,932", "#930", 2);
ribbon(subPlot, subFast, subSlow, "#f00", "#00f");
line(subPlot, subSlow, "#00f");
line(subPlot, subFast, "#f00");
line(subPlot, "700,963 760,961 850,960 900,958 960,958 1000,961 1060,963 1150,963", "#930", 2);
line(subPlot, "1540,935 1590,932 1640,931 1700,935 1780,939 1851,945", "#930", 2);
line(subPlot, "50,991 427,991 427,990 780,990 780,989 1139,989 1139,988 1454,987 1626,986 1852,985", "#0f0", 4);
line(subPlot, "49,1014.5 1865,1014.5", "#f00");
line(subPlot, "1431.5,898 1431.5,1038", "#e00");
```
